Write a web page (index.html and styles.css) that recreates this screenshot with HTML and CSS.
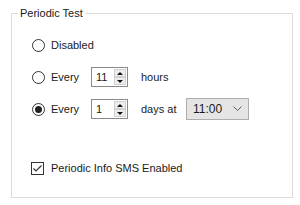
FILE: index.html
```html
<!DOCTYPE html>
<html lang="en">
<head>
    <meta charset="UTF-8">
    <title>Periodic Test</title>
    <link rel="stylesheet" href="styles.css">
</head>
<body>
    <div class="group">
        <span class="group-title">Periodic Test</span>

        <div class="row">
            <span class="radio"></span>
            <span class="label">Disabled</span>
        </div>

        <div class="row">
            <span class="radio"></span>
            <span class="label label-wide">Every</span>
            <div class="spin">
                <span class="spin-value">11</span>
                <div class="spin-btns">
                    <span class="spin-btn"><span class="arrow-up"></span></span>
                    <span class="spin-btn"><span class="arrow-down"></span></span>
                </div>
            </div>
            <span class="unit">hours</span>
        </div>

        <div class="row">
            <span class="radio checked"></span>
            <span class="label label-wide">Every</span>
            <div class="spin">
                <span class="spin-value">1</span>
                <div class="spin-btns">
                    <span class="spin-btn"><span class="arrow-up"></span></span>
                    <span class="spin-btn"><span class="arrow-down"></span></span>
                </div>
            </div>
            <span class="unit unit-days">days at</span>
            <div class="combo">
                <span class="combo-value">11:00</span>
                <svg class="chevron" width="9" height="6" viewBox="0 0 9 6">
                    <path d="M0.5 0.5 L4.5 4.5 L8.5 0.5" fill="none" stroke="#606060" stroke-width="1"/>
                </svg>
            </div>
        </div>

        <div class="row row-check">
            <span class="checkbox">
                <svg width="11" height="11" viewBox="0 0 11 11">
                    <path d="M1.5 5.5 L4 8 L9.5 2.5" fill="none" stroke="#333" stroke-width="1.2"/>
                </svg>
            </span>
            <span class="label">Periodic Info SMS Enabled</span>
        </div>
    </div>
</body>
</html>
```

FILE: styles.css
```css
* {
    margin: 0;
    padding: 0;
    box-sizing: border-box;
}

body {
    background-color: #ffffff;
    color: #1a1a1a;
    font-family: "Liberation Sans", Arial, sans-serif;
    font-size: 11px;
    width: 300px;
    height: 205px;
    overflow: hidden;
    padding-top: 13px;
}

.group {
    position: relative;
    margin-left: 11px;
    width: 282px;
    height: 185px;
    border: 1px solid #dcdcdc;
    padding: 20px 0 0 20px;
    display: flex;
    flex-direction: column;
}

.group-title {
    position: absolute;
    top: -8px;
    left: 6px;
    padding: 0 2px;
    background-color: #ffffff;
    line-height: 14px;
}

.row {
    display: flex;
    align-items: center;
    height: 22px;
    margin-bottom: 10px;
}

.row-check {
    margin-top: 27px;
}

.radio {
    width: 13px;
    height: 13px;
    border: 1px solid #333333;
    border-radius: 50%;
    display: flex;
    align-items: center;
    justify-content: center;
    flex-shrink: 0;
}

.radio.checked::after {
    content: "";
    width: 7px;
    height: 7px;
    border-radius: 50%;
    background-color: #222222;
}

.label {
    margin-left: 6px;
}

.label-wide {
    width: 40px;
}

.spin {
    display: flex;
    width: 37px;
    height: 20px;
    border: 1px solid #8a8a8a;
    background-color: #ffffff;
}

.spin-value {
    flex: 1;
    padding-left: 4px;
    line-height: 18px;
}

.spin-btns {
    width: 13px;
    display: flex;
    flex-direction: column;
    padding: 1px 1px 1px 0;
}

.spin-btn {
    flex: 1;
    background-color: #ededed;
    border: 1px solid #d0d0d0;
    display: flex;
    align-items: center;
    justify-content: center;
}

.arrow-up {
    width: 0;
    height: 0;
    border-left: 3px solid transparent;
    border-right: 3px solid transparent;
    border-bottom: 3px solid #111111;
}

.arrow-down {
    width: 0;
    height: 0;
    border-left: 3px solid transparent;
    border-right: 3px solid transparent;
    border-top: 3px solid #111111;
}

.unit {
    margin-left: 13px;
}

.unit-days {
    width: 45px;
}

.combo {
    display: flex;
    align-items: center;
    width: 63px;
    height: 22px;
    border: 1px solid #adadad;
    background-color: #e5e5e5;
    padding: 0 6px 0 6px;
}

.combo-value {
    flex: 1;
    font-size: 12px;
}

.checkbox {
    width: 13px;
    height: 13px;
    border: 1px solid #333333;
    display: flex;
    align-items: center;
    justify-content: center;
    margin-left: -1px;
}

.row-check .label {
    margin-left: 7px;
}
```
